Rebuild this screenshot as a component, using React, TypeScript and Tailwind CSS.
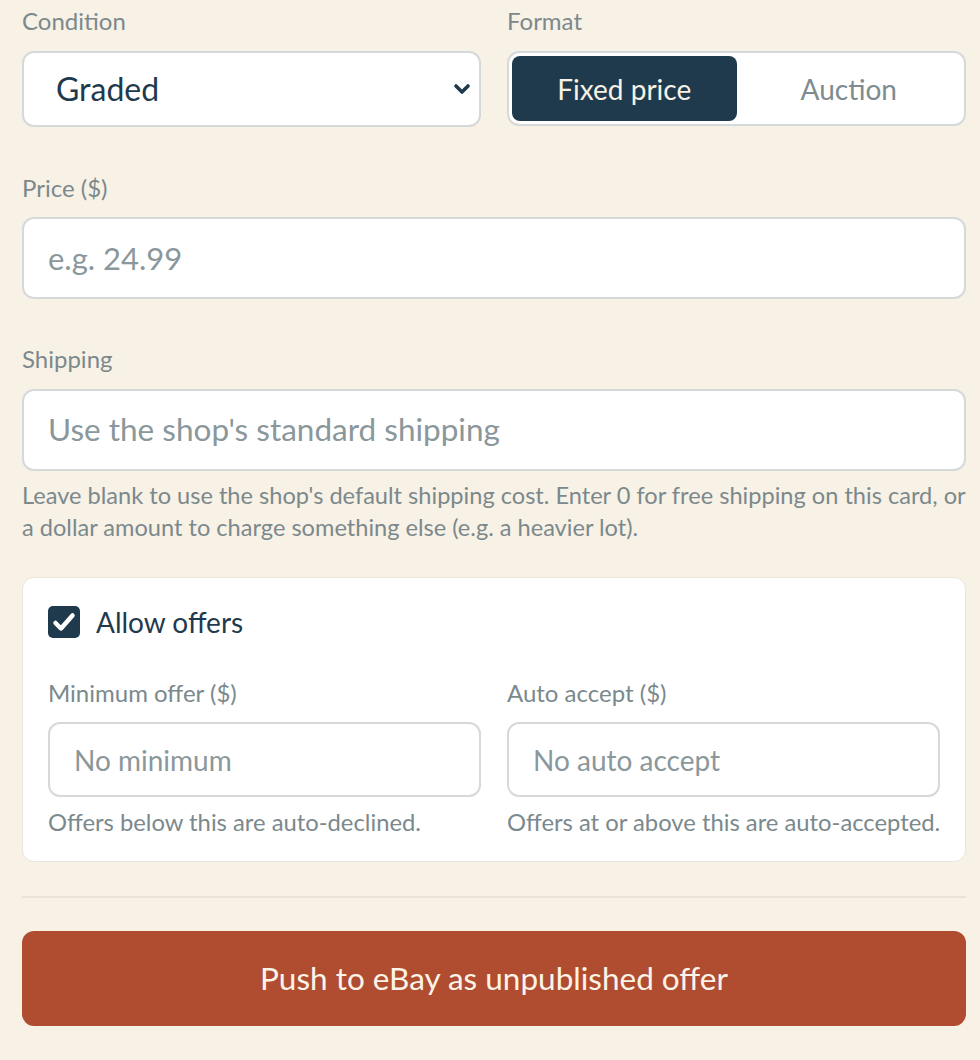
import React from "react";

const font = { fontFamily: "Lato, 'Noto Sans', sans-serif" };

function Label({ children, className = "" }: { children: React.ReactNode; className?: string }) {
  return <div className={`text-[24px] leading-[32px] text-[#7b898d] ${className}`}>{children}</div>;
}

export default function App() {
  return (
    <div style={font} className="min-h-[1060px] w-full bg-[#f8f1e5] pl-[22px] pr-[14px] pt-[5px]">
      <div className="grid grid-cols-2 gap-x-[26px]">
        <div>
          <Label className="mb-[14px]">Condition</Label>
          <div className="flex h-[76px] items-center justify-between rounded-[12px] border-2 border-[#d6d9d9] bg-white pl-[32px] pr-[7px]">
            <span className="text-[32px] text-[#1f3a4d]">Graded</span>
            <svg width="20" height="14" viewBox="0 0 20 14">
              <path d="M4 4 L10 10 L16 4" fill="none" stroke="#1f3a4d" strokeWidth="3.6" strokeLinecap="round" strokeLinejoin="round" />
            </svg>
          </div>
        </div>
        <div>
          <Label className="mb-[14px]">Format</Label>
          <div className="flex h-[75px] rounded-[12px] border-2 border-[#d6d9d9] bg-white p-[3px]">
            <div className="flex flex-1 items-center justify-center rounded-[8px] bg-[#1f3a4d] text-[28px] text-[#f8f1e5]">Fixed price</div>
            <div className="flex flex-1 items-center justify-center text-[28px] text-[#7e8c8f]">Auction</div>
          </div>
        </div>
      </div>

      <Label className="mt-[45px] mb-[13px]">Price ($)</Label>
      <div className="flex h-[82px] items-center rounded-[12px] border-2 border-[#d6d9d9] bg-white px-[24px] text-[31px] text-[#8a979b]">
        e.g. 24.99
      </div>

      <Label className="mt-[44px] mb-[14px]">Shipping</Label>
      <div className="flex h-[82px] items-center rounded-[12px] border-2 border-[#d6d9d9] bg-white px-[24px] text-[31.5px] text-[#8a979b]">
        Use the shop's standard shipping
      </div>
      <div className="mt-[8px] whitespace-nowrap text-[23.6px] leading-[32px] text-[#7b898d]">
        Leave blank to use the shop's default shipping cost. Enter 0 for free shipping on this card, or
        <br />
        a dollar amount to charge something else (e.g. a heavier lot).
      </div>

      <div className="mt-[34px] rounded-[12px] border border-[#ece5da] bg-white px-[25px] pt-[28px] pb-[23px]">
        <div className="flex h-[32px] items-center gap-[16px]">
          <div className="flex h-[32px] w-[32px] items-center justify-center rounded-[5px] bg-[#1f3a4d]">
            <svg width="32" height="32" viewBox="0 0 32 32">
              <path d="M7.5 17 L13 22.5 L24.5 9.5" fill="none" stroke="white" strokeWidth="4.5" strokeLinecap="round" strokeLinejoin="round" />
            </svg>
          </div>
          <span className="text-[28px] text-[#1f3a4d]">Allow offers</span>
        </div>
        <div className="mt-[39px] grid grid-cols-2 gap-x-[26px]">
          <div>
            <Label className="mb-[13px]">Minimum offer ($)</Label>
            <div className="flex h-[75px] items-center rounded-[12px] border-2 border-[#d6d9d9] bg-white px-[24px] text-[28px] text-[#8a979b]">
              No minimum
            </div>
            <div className="mt-[9px] whitespace-nowrap text-[23.8px] leading-[32px] text-[#7b898d]">Offers below this are auto-declined.</div>
          </div>
          <div>
            <Label className="mb-[13px]">Auto accept ($)</Label>
            <div className="flex h-[75px] items-center rounded-[12px] border-2 border-[#d6d9d9] bg-white px-[24px] text-[28px] text-[#8a979b]">
              No auto accept
            </div>
            <div className="mt-[9px] whitespace-nowrap text-[23.8px] leading-[32px] text-[#7b898d]">Offers at or above this are auto-accepted.</div>
          </div>
        </div>
      </div>

      <div className="mt-[34px] h-[2px] bg-[#e8e2d8]" />

      <div className="mt-[33px] flex h-[95px] items-center justify-center rounded-[12px] bg-[#b04d30] text-[31.5px] text-[#fbf3e8]">
        Push to eBay as unpublished offer
      </div>
    </div>
  );
}
